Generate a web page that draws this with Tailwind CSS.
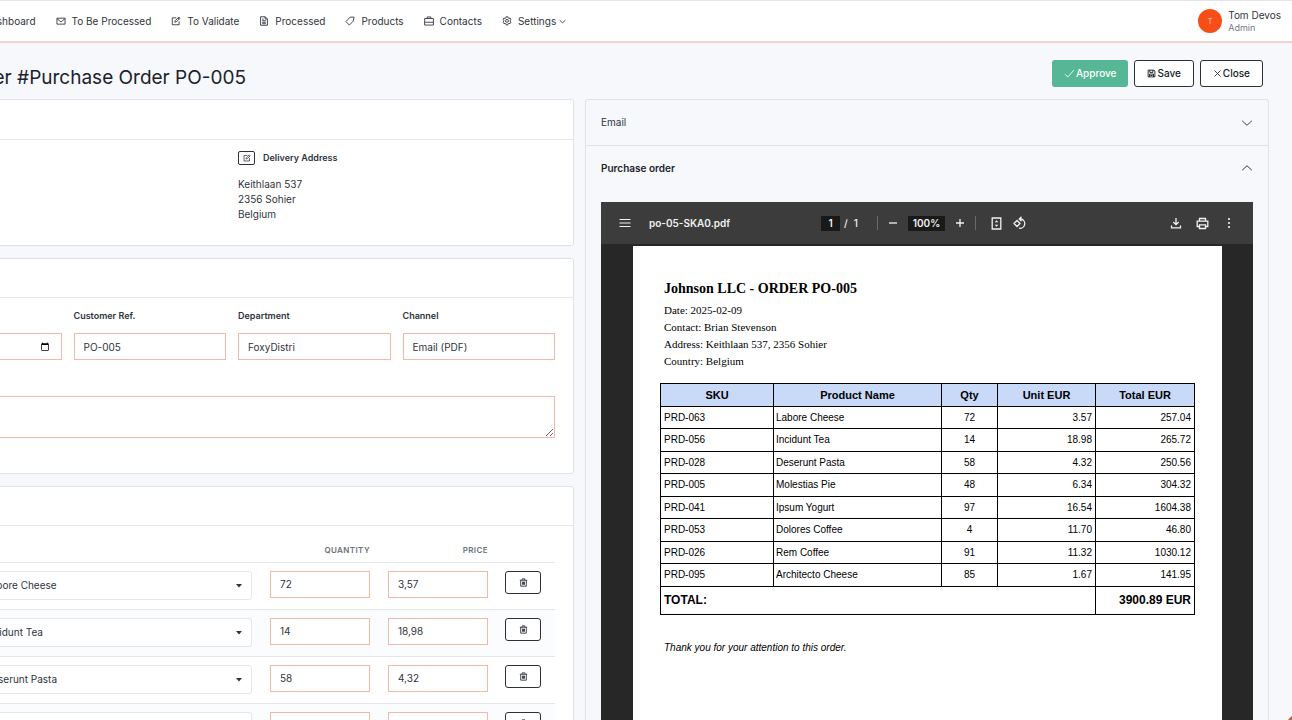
<!DOCTYPE html>
<html lang="en">
<head>
    <meta charset="UTF-8">
    <meta name="viewport" content="width=device-width, initial-scale=1.0">
    <title>Order #Purchase Order PO-005</title>
    <script src="https://cdn.jsdelivr.net/npm/@tailwindcss/browser@4"></script>
</head>
<body class="h-screen overflow-hidden bg-[#f6f8fb] font-['Inter',sans-serif] text-[10px] leading-[15px] text-[#2f343d]">

    <!-- Icon sprite -->
    <svg class="hidden">
        <symbol id="i-mail" viewBox="0 0 16 16"><path d="M4 3.500H1.500V13h13V3.500H12M3.500 3.500h9M1.800 4.500L8 9.500l6.200-5"/></symbol>
        <symbol id="i-edit" viewBox="0 0 16 16"><path d="M8.500 3H2v11h11V8.500M6 10l.7-2.500L12.500 1.700l1.900 1.900L8.600 9.400zM11 3.200l1.900 1.900"/></symbol>
        <symbol id="i-file" viewBox="0 0 16 16"><path d="M2.500 1.200h7.500l3.500 3.500v10.100h-11zM9.800 1.200v3.700h3.700M5 7.500h6M5 10h6M5 12.300h6M5 5h2.500"/></symbol>
        <symbol id="i-tag" viewBox="0 0 16 16"><path d="M8.200 1.800h6.300L13 8.300 7 14.500 1.500 9z"/></symbol>
        <symbol id="i-case" viewBox="0 0 16 16"><path d="M1 4h14v10.500H1zM5 4V1.500h6V4M1 10h14"/></symbol>
        <symbol id="i-gear" viewBox="0 0 16 16"><path d="M6.600 1.200h2.800l.4 1.900 1.300.7 1.900-.6 1.400 2.400-1.500 1.300v1.500l1.500 1.400-1.400 2.400-1.900-.6-1.300.8-.4 1.900H6.600l-.4-1.900-1.300-.8-1.900.6-1.400-2.400 1.500-1.400V6.900L1.600 5.600 3 3.200l1.900.6 1.300-.7z"/><circle cx="8" cy="7.800" r="2.300"/></symbol>
        <symbol id="i-down" viewBox="0 0 16 16"><path d="M1.500 5L8 11l6.500-6"/></symbol>
        <symbol id="i-up" viewBox="0 0 16 16"><path d="M1.500 11L8 5l6.500 6"/></symbol>
        <symbol id="i-check" viewBox="0 0 16 16"><path d="M1.500 9l4 4.200L14.500 3"/></symbol>
        <symbol id="i-save" viewBox="0 0 16 16"><path d="M2 2h10.500L14 3.500V14H2zM5 2v4h5.500V2M4.500 14V9h7v5M6 11.500h4"/></symbol>
        <symbol id="i-close" viewBox="0 0 16 16"><path d="M2.500 2.500l11 11M13.500 2.500l-11 11"/></symbol>
        <symbol id="i-trash" viewBox="0 0 16 16"><path d="M1.500 4h13M5.500 4V1.500h5V4M3 4v10.500h10V4M6.200 6.500v5.500M8 6.500v5.500M9.800 6.500v5.500"/></symbol>
    </svg>

    <!-- The work area is scrolled a little to the right -->
    <div class="-ml-[134px] flex h-full flex-col">

        <header class="flex h-[43px] shrink-0 items-center justify-between border-t border-b-2 border-t-[#e3e4e6] border-b-[#f1d3cf] bg-white pr-[11px]">
            <nav class="flex items-center gap-5 pl-[118px]">
                <a href="#">Dashboard</a>
                <a href="#" class="flex items-center gap-[6px]"><svg class="size-[10px] fill-none stroke-current stroke-[1.400]"><use href="#i-mail"/></svg>To Be Processed</a>
                <a href="#" class="flex items-center gap-[6px]"><svg class="size-[10px] fill-none stroke-current stroke-[1.400]"><use href="#i-edit"/></svg>To Validate</a>
                <a href="#" class="flex items-center gap-[6px]"><svg class="size-[10px] fill-none stroke-current stroke-[1.400]"><use href="#i-file"/></svg>Processed</a>
                <a href="#" class="flex items-center gap-[6px]"><svg class="size-[10px] fill-none stroke-current stroke-[1.400]"><use href="#i-tag"/></svg>Products</a>
                <a href="#" class="flex items-center gap-[6px]"><svg class="size-[10px] fill-none stroke-current stroke-[1.400]"><use href="#i-case"/></svg>Contacts</a>
                <a href="#" class="flex items-center gap-[6px]"><svg class="size-[10px] fill-none stroke-current stroke-[1.400]"><use href="#i-gear"/></svg><span class="flex items-center gap-[3px]">Settings<svg class="size-[7px] fill-none stroke-current stroke-2"><use href="#i-down"/></svg></span></a>
            </nav>
            <div class="flex items-center gap-[6px]">
                <span class="flex size-6 items-center justify-center rounded-full bg-[#f74d16] text-[8px] text-[#ffc0a8]">T</span>
                <div>
                    <div class="leading-[13px]">Tom Devos</div>
                    <div class="text-[9px] leading-[11px] text-[#747a84]">Admin</div>
                </div>
            </div>
        </header>

        <main class="flex min-h-0 flex-1 flex-col pr-[23px] pl-6">
            <div class="flex h-[56px] shrink-0 items-center justify-between pt-[14px] pr-[6px]">
                <h1 class="text-[19px] leading-6 text-[#1c212b]">Update Order #Purchase Order PO-005</h1>
                <div class="flex gap-[6px] pb-[10px] font-medium">
                    <button class="flex h-[27px] items-center rounded-[3px] bg-[#55b795] px-3 text-white"><svg class="mr-px size-[11px] fill-none stroke-current stroke-[1.200]"><use href="#i-check"/></svg>Approve</button>
                    <button class="flex h-[27px] items-center rounded-[3px] border border-[#2b303a] bg-white px-3 text-[#15181e]"><svg class="mr-px size-[9px] fill-none stroke-current stroke-[1.600]"><use href="#i-save"/></svg>Save</button>
                    <button class="flex h-[27px] items-center rounded-[3px] border border-[#2b303a] bg-white px-3 text-[#15181e]"><svg class="mr-px size-[9px] fill-none stroke-current stroke-[1.400]"><use href="#i-close"/></svg>Close</button>
                </div>
            </div>

            <div class="grid min-h-0 flex-1 grid-cols-2 gap-[11px]">

                <!-- Left: order form -->
                <div class="flex flex-col gap-3">
                    <section class="shrink-0 rounded-[3px] border border-[#dfe3e9] bg-white">
                        <div class="h-10 border-b border-[#e3e6eb]"></div>
                        <div class="grid h-[105px] grid-cols-2 gap-3 px-[18px] pt-[10px]">
                            <div class="col-start-2">
                                <div class="flex items-center gap-2">
                                    <button aria-label="Edit delivery address" class="flex h-[14px] w-[17px] items-center justify-center rounded-[2px] border border-[#2b303a]"><svg class="size-2 fill-none stroke-current stroke-[1.500]"><use href="#i-edit"/></svg></button>
                                    <h2 class="text-[9px] font-semibold">Delivery Address</h2>
                                </div>
                                <p class="mt-3">Keithlaan 537<br>2356 Sohier<br>Belgium</p>
                            </div>
                        </div>
                    </section>

                    <section class="shrink-0 rounded-[3px] border border-[#dfe3e9] bg-white">
                        <div class="h-[39px] border-b border-[#e3e6eb]"></div>
                        <div class="grid h-[175px] grid-cols-4 content-start gap-x-3 px-[18px] pt-[10px]">
                            <label for="date" class="text-[9px] font-semibold">Order Date</label>
                            <label for="ref" class="text-[9px] font-semibold">Customer Ref.</label>
                            <label for="dept" class="text-[9px] font-semibold">Department</label>
                            <label for="channel" class="text-[9px] font-semibold">Channel</label>
                            <input id="date" type="date" value="2025-02-09" class="mt-[10px] h-[27px] w-full min-w-0 border border-[#f3b9a8] px-[9px]">
                            <input id="ref" type="text" value="PO-005" class="mt-[10px] h-[27px] w-full min-w-0 border border-[#f3b9a8] px-[9px]">
                            <input id="dept" type="text" value="FoxyDistri" class="mt-[10px] h-[27px] w-full min-w-0 border border-[#f3b9a8] px-[9px]">
                            <input id="channel" type="text" value="Email (PDF)" class="mt-[10px] h-[27px] w-full min-w-0 border border-[#f3b9a8] px-[9px]">
                            <textarea aria-label="Remarks" class="col-span-4 mt-9 h-[42px] border border-[#f3b9a8] px-[9px]"></textarea>
                        </div>
                    </section>

                    <section class="shrink-0 rounded-[3px] border border-[#dfe3e9] bg-white">
                        <div class="h-[39px] border-b border-[#e3e6eb]"></div>
                        <div class="px-[18px]">
                            <table class="w-full table-fixed">
                                <thead>
                                    <tr class="h-9 border-b border-[#e3e6eb] text-[8px] tracking-wider text-[#6b717c] uppercase">
                                        <th class="w-auto"></th>
                                        <th class="w-[118px] pt-[14px] pr-[9px] text-right font-semibold">Quantity</th>
                                        <th class="w-[118px] pt-[14px] pr-[9px] text-right font-semibold">Price</th>
                                        <th class="w-[58px]"></th>
                                    </tr>
                                </thead>
                                <tbody id="order-lines"></tbody>
                            </table>
                        </div>
                    </section>
                </div>

                <!-- Right: source documents -->
                <div class="flex min-h-0 flex-col rounded-t-[3px] border border-b-0 border-[#dfe3e9]">
                    <button class="flex h-[46px] shrink-0 items-center justify-between border-b border-[#dfe3e9] px-[15px]">Email<svg class="size-3 fill-none stroke-current stroke-[1.200]"><use href="#i-down"/></svg></button>
                    <button class="flex h-[44px] shrink-0 items-center justify-between px-[15px] font-semibold text-[#1c212b]">Purchase order<svg class="size-3 fill-none stroke-current stroke-[1.200]"><use href="#i-up"/></svg></button>

                    <div class="mx-[15px] mt-3 flex min-h-0 flex-1 flex-col bg-[#272727]">
                        <div class="flex h-[42px] shrink-0 items-center bg-[#3c3c3c] font-semibold text-[#f1f1f1]">
                            <div class="flex flex-1 items-center gap-[18px] pl-[18px]">
                                <button aria-label="Menu"><svg viewBox="0 0 12 12" class="size-3 fill-none stroke-current stroke-[1.200]"><path d="M.5 2.500h11M.5 6h11M.5 9.500h11"/></svg></button>
                                <span>po-05-SKA0.pdf</span>
                            </div>
                            <div class="flex items-center pr-[6px]">
                                <input aria-label="Page" value="1" class="h-[15px] w-[19px] bg-[#191919] text-center">
                                <span class="ml-1 flex gap-[6px] font-medium"><span>/</span><span>1</span></span>
                                <span class="mr-[9px] ml-[19px] h-[14px] w-px bg-[#6a6a6a]"></span>
                                <button aria-label="Zoom out"><svg viewBox="0 0 12 12" class="size-3 fill-none stroke-current stroke-[1.300]"><path d="M2 6h8"/></svg></button>
                                <input aria-label="Zoom" value="100%" class="mx-[9px] h-[15px] w-[37px] bg-[#191919] text-center">
                                <button aria-label="Zoom in"><svg viewBox="0 0 12 12" class="size-3 fill-none stroke-current stroke-[1.300]"><path d="M2 6h8M6 2v8"/></svg></button>
                                <span class="mr-[14px] ml-[9px] h-[14px] w-px bg-[#6a6a6a]"></span>
                                <button aria-label="Fit to page"><svg viewBox="0 0 13 13" class="size-[13px] fill-none stroke-current stroke-[1.300]"><path d="M2.200 1h8.600v11H2.200z"/><path d="M4.700 5.200L6.500 3.200l1.800 2zM4.700 7.800l1.800 2 1.800-2z" class="fill-current stroke-none"/></svg></button>
                                <button aria-label="Rotate" class="ml-[10px]"><svg viewBox="0 0 14 14" class="size-[14px] fill-none stroke-current stroke-[1.300]"><path d="M1 7.500L4 4.500l3 3-3 3zM6.500 3H8a4.700 4.700 0 1 1-2 9.200M8.500.8L6.300 3l2.200 2.200"/></svg></button>
                            </div>
                            <div class="flex flex-1 items-center justify-end gap-[14px] pr-[18px]">
                                <button aria-label="Download"><svg viewBox="0 0 12 12" class="size-3 fill-none stroke-current stroke-[1.300]"><path d="M6 1v6.500M3.300 5L6 7.700 8.700 5M1.500 8.500v2.300h9V8.500"/></svg></button>
                                <button aria-label="Print"><svg viewBox="0 0 13 13" class="size-[13px] fill-none stroke-current stroke-[1.300]"><path d="M3.500 4V1.500h6V4M3.500 9.500H1.200V4.200h10.600v5.300H9.500M3.500 7.800h6v3.700h-6z"/></svg></button>
                                <button aria-label="More"><svg viewBox="0 0 12 12" class="size-3 fill-current"><circle cx="6" cy="2" r="1.100"/><circle cx="6" cy="6" r="1.100"/><circle cx="6" cy="10" r="1.100"/></svg></button>
                            </div>
                        </div>

                        <!-- PDF page -->
                        <article class="mt-[2px] mr-[31px] ml-8 min-h-0 flex-1 bg-white px-[27px] pt-[34px] text-black">
                            <div class="pl-1 font-['Liberation_Serif',serif] text-[11px] leading-[17px]">
                                <h2 class="mb-1 text-[14px] leading-[18px] font-bold">Johnson LLC - ORDER PO-005</h2>
                                <p>Date: 2025-02-09</p>
                                <p>Contact: Brian Stevenson</p>
                                <p>Address: Keithlaan 537, 2356 Sohier</p>
                                <p>Country: Belgium</p>
                            </div>
                            <table class="mt-[13px] w-full table-fixed border-collapse border border-black font-['Liberation_Sans',sans-serif] text-[10px] leading-3">
                                <thead>
                                    <tr class="h-[23px] bg-[#c9daf8] text-[11px]">
                                        <th class="w-[113px] border border-black">SKU</th>
                                        <th class="border border-black">Product Name</th>
                                        <th class="w-[56px] border border-black">Qty</th>
                                        <th class="w-[98px] border border-black">Unit EUR</th>
                                        <th class="w-[99px] border border-black">Total EUR</th>
                                    </tr>
                                </thead>
                                <tbody id="pdf-lines"></tbody>
                                <tfoot>
                                    <tr class="h-7 text-[12px] font-bold">
                                        <td colspan="4" class="border border-black px-[3px] pb-[2px]">TOTAL:</td>
                                        <td class="border border-black px-[3px] pb-[2px] text-right">3900.89 EUR</td>
                                    </tr>
                                </tfoot>
                            </table>
                            <p class="mt-[27px] pl-1 font-['Liberation_Sans',sans-serif] text-[10px] leading-3 italic">Thank you for your attention to this order.</p>
                        </article>
                    </div>
                </div>
            </div>
        </main>
    </div>

    <!-- Help bubble -->
    <button aria-label="Help" class="fixed -right-8 -bottom-8 size-10 rounded-full bg-[#c8643c]"></button>

    <script>
        const lines = [
            ["PRD-063", "Labore Cheese", 72, 3.57],
            ["PRD-056", "Incidunt Tea", 14, 18.98],
            ["PRD-028", "Deserunt Pasta", 58, 4.32],
            ["PRD-005", "Molestias Pie", 48, 6.34],
            ["PRD-041", "Ipsum Yogurt", 97, 16.54],
            ["PRD-053", "Dolores Coffee", 4, 11.70],
            ["PRD-026", "Rem Coffee", 91, 11.32],
            ["PRD-095", "Architecto Cheese", 85, 1.67]
        ];

        // Editable order lines
        document.getElementById("order-lines").innerHTML = lines.map(([sku, name, qty, price]) => `
            <tr class="h-[47px] border-b border-[#e3e6eb] align-top even:bg-[#fafcfd]">
                <td class="pt-2 pr-[9px]">
                    <div class="relative">
                        <select aria-label="Product ${sku}" class="h-[29px] w-full appearance-none rounded-[3px] border border-[#e3e6eb] bg-white pl-[75px]"><option>${name}</option></select>
                        <svg viewBox="0 0 6 4" class="pointer-events-none absolute top-[13px] right-[10px] h-1 w-[6px] fill-[#2f343d]"><path d="M0 0h6L3 3.500z"/></svg>
                    </div>
                </td>
                <td class="px-[9px] pt-2"><input aria-label="Quantity ${sku}" value="${qty}" class="h-[27px] w-full border border-[#f3b9a8] bg-white px-[9px]"></td>
                <td class="px-[9px] pt-2"><input aria-label="Price ${sku}" value="${price.toFixed(2).replace(".", ",")}" class="h-[27px] w-full border border-[#f3b9a8] bg-white px-[9px]"></td>
                <td class="pt-2 pl-2"><button aria-label="Delete ${sku}" class="flex h-[23px] w-9 items-center justify-center rounded-[3px] border border-[#2b303a] bg-white"><svg class="size-[9px] fill-none stroke-current stroke-[1.600]"><use href="#i-trash"/></svg></button></td>
            </tr>`).join("");

        // Lines printed in the PDF
        document.getElementById("pdf-lines").innerHTML = lines.map(([sku, name, qty, price]) => `
            <tr class="odd:h-[22px] even:h-[23px]">
                <td class="border border-black px-[3px]">${sku}</td>
                <td class="border border-black px-[2px]">${name}</td>
                <td class="border border-black text-center">${qty}</td>
                <td class="border border-black px-[3px] text-right">${price.toFixed(2)}</td>
                <td class="border border-black px-[3px] text-right">${(qty * price).toFixed(2)}</td>
            </tr>`).join("");
    </script>

</body>
</html>
